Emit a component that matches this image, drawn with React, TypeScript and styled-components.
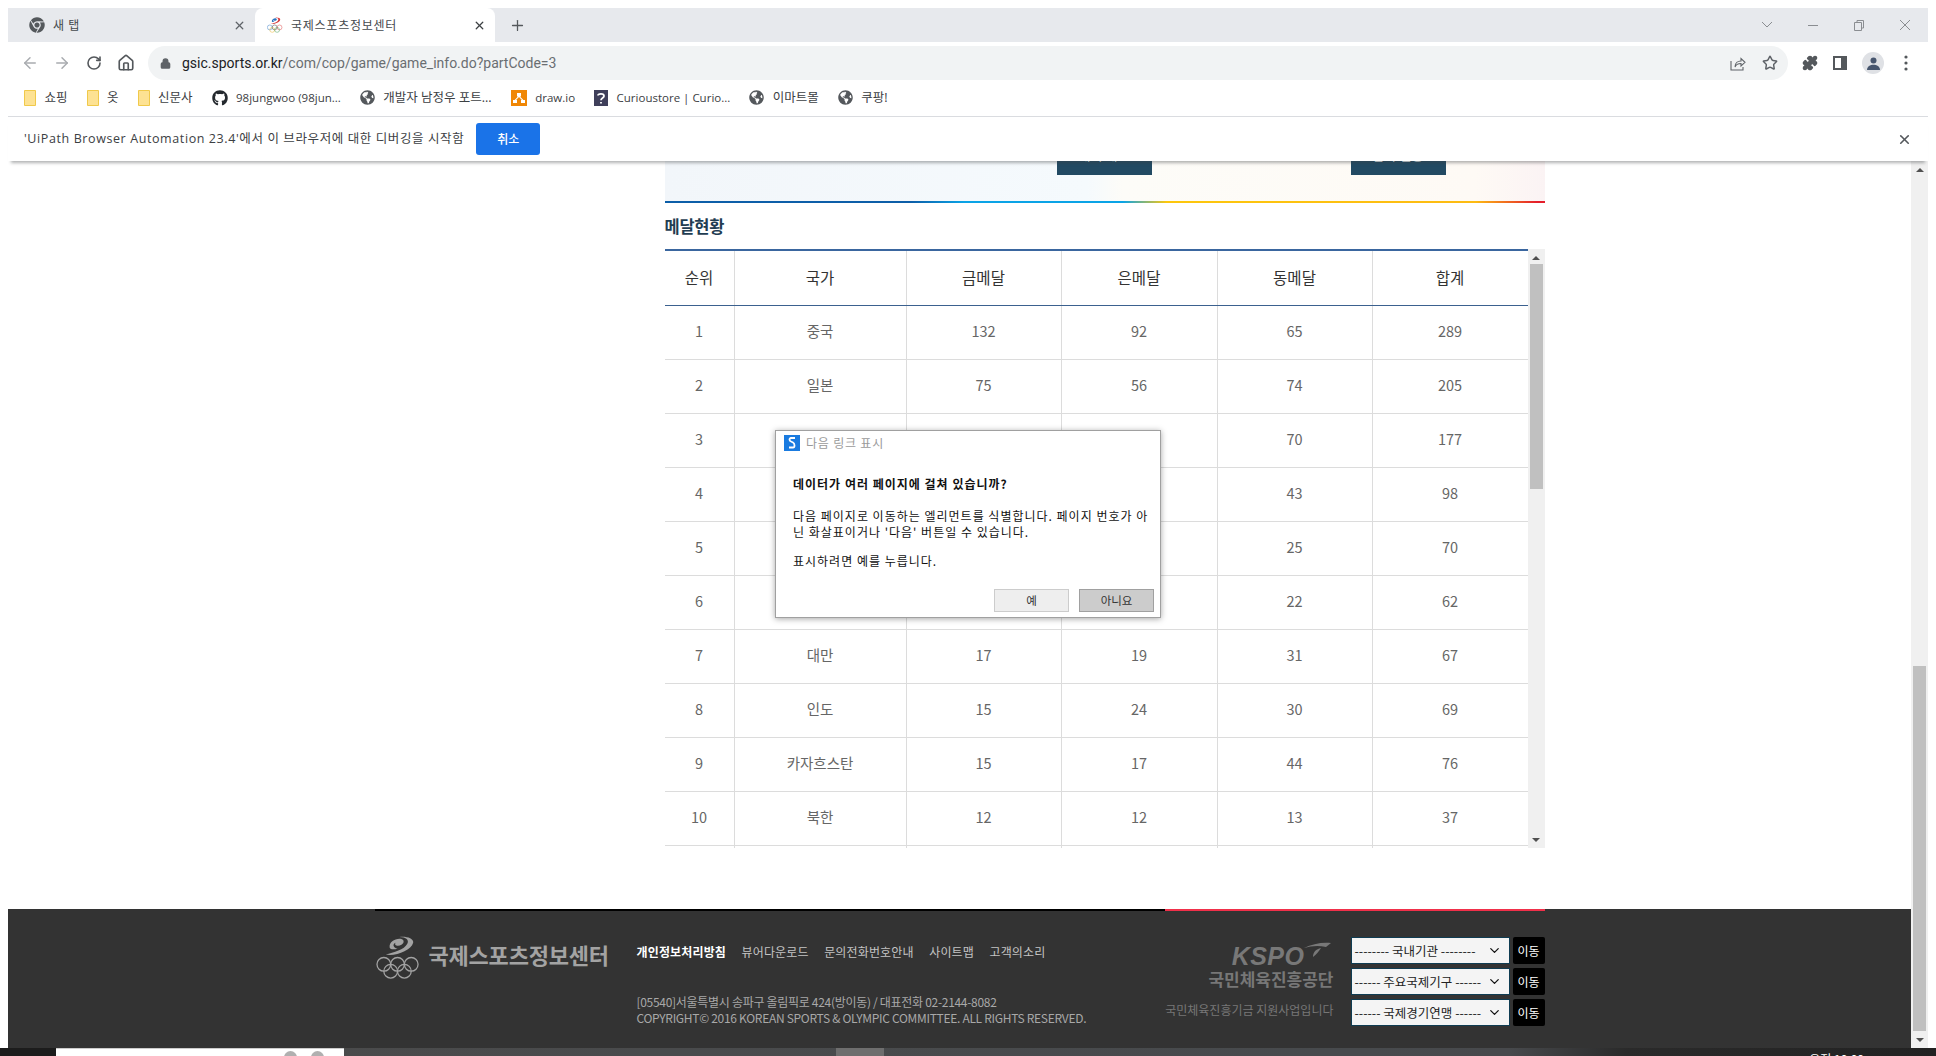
import styled, { createGlobalStyle } from "styled-components";
import { ArrowLeft, ArrowRight, RotateCw, Home, Lock, Star, Puzzle, X, Plus, ChevronDown } from "lucide-react";
import { FaGithub, FaGlobeAmericas, FaChrome } from "react-icons/fa";

const CJK = `"Noto Sans CJK KR", "Noto Sans", sans-serif`;
const UI = `"Open Sans", "Noto Sans CJK KR", sans-serif`;

const GlobalStyle = createGlobalStyle`
  html, body {
    margin: 0;
    padding: 0;
    height: 100%;
    overflow: hidden;
    background: #fff;
  }
  * { box-sizing: border-box; }
`;

const Screen = styled.div`
  width: 1936px;
  height: 1056px;
  display: flex;
  flex-direction: column;
  background: #fff;
  overflow: hidden;
`;
const Window = styled.div`
  flex: 1;
  min-height: 0;
  display: flex;
  flex-direction: column;
  padding: 8px 8px 0 8px;
`;

/* browser chrome */
const TabStrip = styled.div`
  height: 34px;
  flex: none;
  display: flex;
  align-items: stretch;
  background: #e7e9ed;
`;
const Tab = styled.div<{ $active?: boolean; $width: number }>`
  width: ${(p) => p.$width}px;
  display: flex;
  align-items: center;
  padding: 0 ${(p) => (p.$active ? "9px 0 12px" : "9px 0 21px")};
  background: ${(p) => (p.$active ? "#fff" : "transparent")};
  border-radius: 8px 8px 0 0;
  color: #5f6368;
  flex: none;
`;
const TabTitle = styled.span`
  margin-left: 8px;
  font: 12px/16px ${CJK};
  color: #45494d;
  flex: 1;
  letter-spacing: 0.75px;
  white-space: pre;
`;
const TabPlus = styled.div`
  display: flex;
  align-items: center;
  margin-left: 14px;
  color: #54585c;
`;
const WindowControls = styled.div`
  margin-left: auto;
  display: flex;
  align-items: center;
  gap: 26px;
  padding-right: 13px;
`;
const Toolbar = styled.div`
  height: 42px;
  flex: none;
  display: flex;
  align-items: center;
  padding-left: 6px;
  color: #5f6368;
`;
const NavButton = styled.div<{ $dim?: boolean }>`
  width: 32px;
  flex: none;
  display: flex;
  justify-content: center;
  color: ${(p) => (p.$dim ? "#a9acb0" : "#54585c")};
`;
const UrlPill = styled.div`
  margin-left: 6px;
  width: 1640px;
  flex: none;
  height: 34px;
  border-radius: 17px;
  background: #f1f3f4;
  display: flex;
  align-items: center;
  padding: 0 10px 0 12px;
  color: #5f6368;
`;
const UrlText = styled.span`
  margin-left: 11px;
  font: 14px/18px Roboto, sans-serif;
  color: #6a6e72;
  b {
    font-weight: 400;
    color: #202124;
  }
`;
const PillIcons = styled.div`
  margin-left: auto;
  display: flex;
  align-items: center;
  gap: 16px;
`;
const ToolIcons = styled.div`
  margin-left: 14px;
  display: flex;
  align-items: center;
  gap: 15px;
  color: #54585c;
`;
const Avatar = styled.div`
  width: 22px;
  height: 22px;
  border-radius: 50%;
  background: #dfe1e5;
  display: flex;
  align-items: center;
  justify-content: center;
`;
const Bookmarks = styled.div`
  height: 33px;
  flex: none;
  display: flex;
  align-items: center;
  padding: 0 0 5px 16px;
  gap: 19px;
  border-bottom: 1px solid #dadce0;
`;
const Bookmark = styled.div<{ $latin?: boolean }>`
  display: flex;
  align-items: center;
  gap: 8.5px;
  font: ${(p) => (p.$latin ? "11.5px" : "12.5px")} / 16px ${UI};
  color: #3c4043;
  white-space: nowrap;
  svg {
    flex: none;
  }
`;
const InfoBar = styled.div`
  height: 44px;
  flex: none;
  display: flex;
  align-items: center;
  padding: 0 16px;
  position: relative;
  z-index: 2;
  background: #fff;
  box-shadow: 0 5px 3px -3px rgba(60, 64, 67, 0.4);
`;
const InfoText = styled.span`
  font: 12.5px/16px ${UI};
  color: #3c4043;
  letter-spacing: 0.6px;
  white-space: nowrap;
`;
const CancelButton = styled.div`
  margin-left: 12px;
  width: 64px;
  height: 32px;
  border-radius: 3px;
  background: #1a73e8;
  color: #fff;
  font: 500 12px/32px ${CJK};
  text-align: center;
`;
const InfoClose = styled.div`
  margin-left: auto;
  display: flex;
  color: #54585c;
`;

/* page */
const Viewport = styled.div`
  flex: 1;
  min-height: 0;
  display: flex;
  position: relative;
`;
const Page = styled.div`
  flex: 1;
  min-width: 0;
  display: flex;
  flex-direction: column;
  overflow: hidden;
`;
const Content = styled.main`
  width: 1170px;
  margin: 0 auto;
  padding-left: 290px;
`;
const Banner = styled.div`
  height: 42px;
  display: flex;
  overflow: hidden;
  padding-left: 392px;
  gap: 199px;
  background: linear-gradient(90deg, #f2f6fa 0%, #f5fafd 48%, #fdfcf8 52%, #fefaf5 92%, #fbf3f4 100%);
  border-bottom: 2px solid;
  border-image: linear-gradient(
      90deg,
      #0c5ea8 0%,
      #0c5ea8 28%,
      #0aa3e6 34%,
      #0aa3e6 52%,
      #fdc70c 57%,
      #fdbb12 92%,
      #e41e2b 99%
    )
    1;
`;
const BannerButton = styled.div`
  width: 95px;
  height: 40px;
  margin-top: -26px;
  flex: none;
  background: #224a63;
  color: #d8e0e6;
  font: 13px/40px ${CJK};
  text-align: center;
`;
const SectionTitle = styled.h2`
  margin: 0;
  height: 46px;
  font: 700 16.5px/47px ${CJK};
  color: #1f3d52;
  letter-spacing: -0.3px;
`;
const TableWrap = styled.div`
  height: 599px;
  display: flex;
  overflow: hidden;
`;
const Table = styled.div`
  width: 863px;
  flex: none;
  border-top: 2px solid #3a669f;
  overflow: hidden;
`;
const Row = styled.div<{ $head?: boolean }>`
  display: grid;
  grid-template-columns: 69px 172px 155px 156px 155px 156px;
  height: ${(p) => (p.$head ? "55px" : "54px")};
  border-bottom: 1px solid ${(p) => (p.$head ? "#3b618f" : "#dcdcdc")};
`;
const Cell = styled.div<{ $head?: boolean }>`
  display: flex;
  align-items: center;
  justify-content: center;
  padding-bottom: ${(p) => (p.$head ? "2px" : "3px")};
  border-left: 1px solid #dcdcdc;
  font: ${(p) => (p.$head ? "15.5px" : "14.5px")} / 20px ${CJK};
  color: ${(p) => (p.$head ? "#333" : "#666")};
  &:first-child {
    border-left: 0;
  }
`;
const Track = styled.div<{ $width: number }>`
  width: ${(p) => p.$width}px;
  flex: none;
  display: flex;
  flex-direction: column;
  align-items: center;
  background: #f0f0f0;
`;
const TrackArrow = styled.div<{ $end?: boolean }>`
  height: 17px;
  flex: none;
  margin-top: ${(p) => (p.$end ? "auto" : "0")};
  display: flex;
  align-items: center;
  justify-content: center;
`;
const Thumb = styled.div<{ $height: number; $push?: boolean }>`
  width: 13px;
  height: ${(p) => p.$height}px;
  flex: none;
  margin-top: ${(p) => (p.$push ? "auto" : "-2px")};
  background: #c0c0c0;
`;
const ArrowGlyph = styled.div<{ $down?: boolean }>`
  width: 0;
  height: 0;
  border-left: 4px solid transparent;
  border-right: 4px solid transparent;
  ${(p) => (p.$down ? "border-top: 4px solid #505050;" : "border-bottom: 4px solid #505050;")}
`;

/* footer */
const Footer = styled.footer`
  margin-top: auto;
  height: 139px;
  flex: none;
  background: #333;
`;
const FooterInner = styled.div`
  width: 1170px;
  margin: 0 auto;
`;
const FooterLine = styled.div`
  height: 2px;
  display: grid;
  grid-template-columns: 790px 380px;
  background: #000;
  div {
    background: #f0304a;
    grid-column: 2;
  }
`;
const FooterBody = styled.div`
  display: flex;
  align-items: flex-start;
`;
const FooterLogo = styled.div`
  width: 262px;
  flex: none;
  padding: 24px 0 0 1px;
  display: flex;
  align-items: center;
  gap: 8px;
`;
const FooterLogoText = styled.span`
  margin-bottom: 8px;
  font: 700 22px/28px ${CJK};
  color: #a3a3a3;
  letter-spacing: -0.2px;
  white-space: nowrap;
`;
const FooterCenter = styled.div`
  width: 460px;
  flex: none;
  padding-top: 32px;
`;
const FooterNav = styled.nav`
  display: flex;
  gap: 15.5px;
  height: 18px;
  align-items: center;
`;
const FooterLink = styled.a<{ $strong?: boolean }>`
  font: ${(p) => (p.$strong ? 700 : 400)} 12px/18px ${CJK};
  color: ${(p) => (p.$strong ? "#fff" : "#c4c4c4")};
  letter-spacing: 0.15px;
  white-space: nowrap;
`;
const FooterAddress = styled.p`
  margin: 33px 0 0;
  font: 12px/16px ${CJK};
  color: #a8a8a8;
  letter-spacing: -0.3px;
  white-space: nowrap;
`;
const FooterRight = styled.div`
  flex: 1;
  display: flex;
  justify-content: flex-end;
  align-items: flex-start;
  padding-top: 26px;
  gap: 17px;
`;
const Kspo = styled.div`
  display: flex;
  flex-direction: column;
  align-items: flex-end;
`;
const KspoMark = styled.div`
  position: relative;
  height: 24px;
  margin-top: 7px;
  padding-right: 29px;
  font: italic 700 25px/24px "Liberation Sans", sans-serif;
  letter-spacing: 0.5px;
  color: #787878;
  svg {
    position: absolute;
    right: 3px;
    top: -2px;
  }
`;
const KspoName = styled.div`
  margin-top: -1px;
  font: 700 17px/24px ${CJK};
  color: #777;
  white-space: nowrap;
`;
const KspoNote = styled.div`
  margin-top: 10px;
  font: 12px/18px ${CJK};
  color: #777;
  white-space: nowrap;
`;
const Links = styled.div`
  display: flex;
  flex-direction: column;
  gap: 4px;
`;
const LinkRow = styled.div`
  display: flex;
  gap: 3px;
`;
const SelectBox = styled.div`
  width: 159px;
  height: 27px;
  padding: 0 7px 0 3px;
  display: flex;
  align-items: center;
  justify-content: space-between;
  background: #f4f4f4;
  border: 1px solid #0f3c52;
  font: 12.5px/18px ${CJK};
  color: #222;
  white-space: pre;
`;
const GoButton = styled.div`
  width: 32px;
  height: 27px;
  border-radius: 2px;
  background: #000;
  color: #fff;
  font: 12px/27px ${CJK};
  text-align: center;
`;

/* dialog over the page */
const Dialog = styled.div`
  position: absolute;
  left: 767px;
  top: 269px;
  width: 386px;
  height: 188px;
  z-index: 3;
  background: #fff;
  border: 1px solid #a0a0a0;
  box-shadow: 0 1px 6px rgba(0, 0, 0, 0.35);
  padding: 4px 6px 0 8px;
  display: flex;
  flex-direction: column;
  font: 12px/16.5px ${CJK};
  color: #111;
`;
const DialogTitle = styled.div`
  display: flex;
  align-items: center;
  gap: 6px;
  height: 16px;
  color: #9a9a9a;
  font-size: 12px;
  letter-spacing: 0.8px;
`;
const DialogBody = styled.div`
  padding: 25px 0 0 9px;
  letter-spacing: 1px;
  white-space: nowrap;
  strong {
    display: block;
    font-weight: 700;
    margin-bottom: 15px;
  }
  p {
    margin: 0 0 12px;
  }
`;
const DialogActions = styled.div`
  margin-top: auto;
  margin-bottom: 5px;
  display: flex;
  justify-content: flex-end;
  gap: 10px;
`;
const DialogButton = styled.div<{ $focused?: boolean }>`
  width: 75px;
  height: 23px;
  text-align: center;
  font: 11.5px/21px ${CJK};
  color: #333;
  background: ${(p) => (p.$focused ? "#ccc" : "#eee")};
  border: 1px solid ${(p) => (p.$focused ? "#a0a0a0" : "#ccc")};
`;

/* taskbar, cut off by the bottom of the window */
const Taskbar = styled.div`
  height: 8px;
  flex: none;
  display: flex;
  overflow: hidden;
  background: linear-gradient(90deg, #4b4b4b 0%, #474a4d 70%, #47494c 78%, #2a2a2a 84%, #222 100%);
`;
const StartArea = styled.div`
  width: 56px;
  flex: none;
  background: #1c1c1c;
`;
const SearchBox = styled.div`
  width: 288px;
  flex: none;
  display: flex;
  justify-content: flex-end;
  gap: 14px;
  padding: 2px 20px 0 0;
  background: #fff;
  border-top: 1px solid #ccc;
`;
const Peek = styled.div`
  width: 13px;
  height: 13px;
  border-radius: 50%;
  background: #b0b0b0;
`;
const ActiveApp = styled.div`
  width: 48px;
  margin-left: 492px;
  flex: none;
  background: #6e6e6e;
`;
const Clock = styled.div`
  margin-left: auto;
  margin-right: 72px;
  margin-top: 3px;
  font: 12px/16px ${CJK};
  color: #fff;
  white-space: nowrap;
`;

const medals = [
  ["1", "중국", "132", "92", "65", "289"],
  ["2", "일본", "75", "56", "74", "205"],
  ["3", "한국", "49", "58", "70", "177"],
  ["4", "인도네시아", "31", "24", "43", "98"],
  ["5", "우즈베키스탄", "21", "24", "25", "70"],
  ["6", "이란", "20", "20", "22", "62"],
  ["7", "대만", "17", "19", "31", "67"],
  ["8", "인도", "15", "24", "30", "69"],
  ["9", "카자흐스탄", "15", "17", "44", "76"],
  ["10", "북한", "12", "12", "13", "37"],
  ["", "", "", "", "", ""],
];

const bookmarks = [
  { icon: <Folder />, label: "쇼핑" },
  { icon: <Folder />, label: "옷" },
  { icon: <Folder />, label: "신문사" },
  { icon: <FaGithub size={16} color="#24292e" />, label: "98jungwoo (98jun...", latin: true },
  { icon: <FaGlobeAmericas size={15} color="#54585c" />, label: "개발자 남정우 포트..." },
  { icon: <DrawIo />, label: "draw.io", latin: true },
  { icon: <Curio />, label: "Curioustore | Curio...", latin: true },
  { icon: <FaGlobeAmericas size={15} color="#54585c" />, label: "이마트몰" },
  { icon: <FaGlobeAmericas size={15} color="#54585c" />, label: "쿠팡!" },
];

function Folder() {
  return (
    <svg width="12" height="16" viewBox="0 0 12 16">
      <path d="M.5.5h11v15H.5z" fill="#fde293" stroke="#f0c94a" />
    </svg>
  );
}

function DrawIo() {
  return (
    <svg width="16" height="16" viewBox="0 0 16 16">
      <rect width="16" height="16" fill="#f08705" />
      <path d="M6 3h4v3.4H9L12.4 10h1.6v3H10v-3h.9L8 7 5.100 10H6v3H2v-3h1.600L7 6.400H6z" fill="#fff" />
    </svg>
  );
}

function Curio() {
  return (
    <svg width="14" height="16" viewBox="0 0 14 16">
      <rect width="14" height="16" fill="#3f3f5a" />
      <path d="M4 5.500C4 3.500 10 3 10 6c0 2-3 2-3 4.200M7 12v1.500" fill="none" stroke="#fff" strokeWidth="1.800" />
    </svg>
  );
}

function GsicMark({ size, grey }: { size: number; grey?: boolean }) {
  const tone = grey ? "#a3a3a3" : undefined;
  return (
    <svg width={size} height={size} viewBox="0 0 46 46" fill="none">
      <path d="M10 20C20 22 36 16 38 8 39 3 30 1 24 2c7 0 10 3 8 7-3 6-14 9-22 11z" fill={tone ?? "#d83a3a"} />
      <path
        d="M14 13C13 7 20 3 26 4c3 1 3 4 0 6-3 2-8 1-6-2-3 1-3 5 2 6-4 1-7 1-8-1z"
        fill={tone ?? "#2b74c0"}
      />
      <circle cx="8" cy="30" r="7" stroke={tone ?? "#2b74c0"} strokeWidth="1.300" />
      <circle cx="22" cy="30" r="7" stroke={tone ?? "#333"} strokeWidth="1.300" />
      <circle cx="36" cy="30" r="7" stroke={tone ?? "#d83a3a"} strokeWidth="1.300" />
      <circle cx="15" cy="37" r="7" stroke={tone ?? "#e8b020"} strokeWidth="1.300" />
      <circle cx="29" cy="37" r="7" stroke={tone ?? "#3a9a50"} strokeWidth="1.300" />
    </svg>
  );
}

function App() {
  return (
    <Screen>
      <GlobalStyle />
      <Window>
        <TabStrip>
          <Tab $width={247}>
            <FaChrome size={16} color="#54585c" />
            <TabTitle>새 탭</TabTitle>
            <X size={13} strokeWidth={2.4} />
          </Tab>
          <Tab $active $width={240}>
            <GsicMark size={16} />
            <TabTitle>국제스포츠정보센터</TabTitle>
            <X size={13} strokeWidth={2.4} color="#3c4043" />
          </Tab>
          <TabPlus>
            <Plus size={17} strokeWidth={1.8} />
          </TabPlus>
          <WindowControls>
            <svg width="20" height="12" viewBox="0 0 20 12" fill="none" stroke="#8a8d91">
              <path d="M5 3l5 5 5-5" />
            </svg>
            <svg width="20" height="12" viewBox="0 0 20 12" fill="none" stroke="#8a8d91">
              <path d="M5 6.500h10" />
            </svg>
            <svg width="20" height="12" viewBox="0 0 20 12" fill="none" stroke="#8a8d91">
              <path d="M5.500 3.500h7v8h-7zM8 3.500V1.500h6.500v7.500h-2" />
            </svg>
            <svg width="20" height="12" viewBox="0 0 20 12" fill="none" stroke="#8a8d91">
              <path d="M5 1l10 10M15 1L5 11" />
            </svg>
          </WindowControls>
        </TabStrip>
        <Toolbar>
          <NavButton $dim>
            <ArrowLeft size={18} />
          </NavButton>
          <NavButton $dim>
            <ArrowRight size={18} />
          </NavButton>
          <NavButton>
            <RotateCw size={16} strokeWidth={2.4} />
          </NavButton>
          <NavButton>
            <Home size={18} strokeWidth={2.2} />
          </NavButton>
          <UrlPill>
            <Lock size={11} strokeWidth={3} fill="#5f6368" />
            <UrlText>
              <b>gsic.sports.or.kr</b>/com/cop/game/game_info.do?partCode=3
            </UrlText>
            <PillIcons>
              <svg width="16" height="15" viewBox="0 0 16 15" fill="none" stroke="#5f6368" strokeWidth="1.100">
                <path d="M1 5v9h12v-3M5 11c0-4 3-6 6-6V2.500l4 3.800-4 3.700V7.500c-3 0-5 1-6 3.500z" />
              </svg>
              <Star size={16} strokeWidth={2.2} />
            </PillIcons>
          </UrlPill>
          <ToolIcons>
            <Puzzle size={16} fill="#54585c" />
            <svg width="14" height="14" viewBox="0 0 14 14">
              <path d="M0 0h14v14H0zM2 2v10h6V2z" fill="#54585c" fillRule="evenodd" />
            </svg>
            <Avatar>
              <svg width="13" height="13" viewBox="0 0 13 13" fill="#47566e">
                <circle cx="6.500" cy="3.500" r="3" />
                <path d="M0 13c0-7 13-7 13 0z" />
              </svg>
            </Avatar>
            <svg width="14" height="16" viewBox="0 0 14 16" fill="#54585c">
              <circle cx="7" cy="2" r="1.600" />
              <circle cx="7" cy="8" r="1.600" />
              <circle cx="7" cy="14" r="1.600" />
            </svg>
          </ToolIcons>
        </Toolbar>
        <Bookmarks>
          {bookmarks.map((b) => (
            <Bookmark key={b.label} $latin={b.latin}>
              {b.icon}
              {b.label}
            </Bookmark>
          ))}
        </Bookmarks>
        <InfoBar>
          <InfoText>'UiPath Browser Automation 23.4'에서 이 브라우저에 대한 디버깅을 시작함</InfoText>
          <CancelButton>취소</CancelButton>
          <InfoClose>
            <X size={15} strokeWidth={2.6} />
          </InfoClose>
        </InfoBar>
        <Viewport>
          <Page>
            <Content>
              <Banner>
                <BannerButton>대회 개요</BannerButton>
                <BannerButton>참가 현황</BannerButton>
              </Banner>
              <SectionTitle>메달현황</SectionTitle>
              <TableWrap>
                <Table>
                  <Row $head>
                    {["순위", "국가", "금메달", "은메달", "동메달", "합계"].map((h) => (
                      <Cell $head key={h}>
                        {h}
                      </Cell>
                    ))}
                  </Row>
                  {medals.map((row, i) => (
                    <Row key={i}>
                      {row.map((value, j) => (
                        <Cell key={j}>{value}</Cell>
                      ))}
                    </Row>
                  ))}
                </Table>
                <Track $width={17}>
                  <TrackArrow>
                    <ArrowGlyph />
                  </TrackArrow>
                  <Thumb $height={225} />
                  <TrackArrow $end>
                    <ArrowGlyph $down />
                  </TrackArrow>
                </Track>
              </TableWrap>
            </Content>
            <Footer>
              <FooterInner>
                <FooterLine>
                  <div />
                </FooterLine>
                <FooterBody>
                  <FooterLogo>
                    <GsicMark size={45} grey />
                    <FooterLogoText>국제스포츠정보센터</FooterLogoText>
                  </FooterLogo>
                  <FooterCenter>
                    <FooterNav>
                      <FooterLink $strong>개인정보처리방침</FooterLink>
                      <FooterLink>뷰어다운로드</FooterLink>
                      <FooterLink>문의전화번호안내</FooterLink>
                      <FooterLink>사이트맵</FooterLink>
                      <FooterLink>고객의소리</FooterLink>
                    </FooterNav>
                    <FooterAddress>
                      [05540]서울특별시 송파구 올림픽로 424(방이동) / 대표전화 02-2144-8082
                      <br />
                      COPYRIGHT© 2016 KOREAN SPORTS &amp; OLYMPIC COMMITTEE. ALL RIGHTS RESERVED.
                    </FooterAddress>
                  </FooterCenter>
                  <FooterRight>
                    <Kspo>
                      <KspoMark>
                        KSPO
                        <svg width="27" height="16" viewBox="0 0 27 16" fill="#787878">
                          <path d="M0 6C8 2 18 0 27 1l-5 4C14 3 7 4 0 6zM9 15c0-5 3-8 8-9-2 3-4 6-8 9z" />
                        </svg>
                      </KspoMark>
                      <KspoName>국민체육진흥공단</KspoName>
                      <KspoNote>국민체육진흥기금 지원사업입니다</KspoNote>
                    </Kspo>
                    <Links>
                      {["-------- 국내기관 --------", "------ 주요국제기구 ------", "------ 국제경기연맹 ------"].map((label) => (
                        <LinkRow key={label}>
                          <SelectBox>
                            {label}
                            <ChevronDown size={15} strokeWidth={2} color="#111" />
                          </SelectBox>
                          <GoButton>이동</GoButton>
                        </LinkRow>
                      ))}
                    </Links>
                  </FooterRight>
                </FooterBody>
              </FooterInner>
            </Footer>
          </Page>
          <Track $width={17}>
            <TrackArrow>
              <ArrowGlyph />
            </TrackArrow>
            <Thumb $height={365} $push />
            <TrackArrow>
              <ArrowGlyph $down />
            </TrackArrow>
          </Track>
          <Dialog>
            <DialogTitle>
              <svg width="16" height="16" viewBox="0 0 16 16">
                <rect width="16" height="16" fill="#1a7be0" />
                <path d="M11 3H7C5 3 5 6 7 6.500L9 7.500C11 8.500 11 12.500 9 12.500H5" fill="none" stroke="#fff" strokeWidth="1.800" />
              </svg>
              다음 링크 표시
            </DialogTitle>
            <DialogBody>
              <strong>데이터가 여러 페이지에 걸쳐 있습니까?</strong>
              <p>
                다음 페이지로 이동하는 엘리먼트를 식별합니다. 페이지 번호가 아
                <br />
                닌 화살표이거나 '다음' 버튼일 수 있습니다.
              </p>
              <p>표시하려면 예를 누릅니다.</p>
            </DialogBody>
            <DialogActions>
              <DialogButton>예</DialogButton>
              <DialogButton $focused>아니요</DialogButton>
            </DialogActions>
          </Dialog>
        </Viewport>
      </Window>
      <Taskbar>
        <StartArea />
        <SearchBox>
          <Peek />
          <Peek />
        </SearchBox>
        <ActiveApp />
        <Clock>오전 10:00</Clock>
      </Taskbar>
    </Screen>
  );
}

export default App;
